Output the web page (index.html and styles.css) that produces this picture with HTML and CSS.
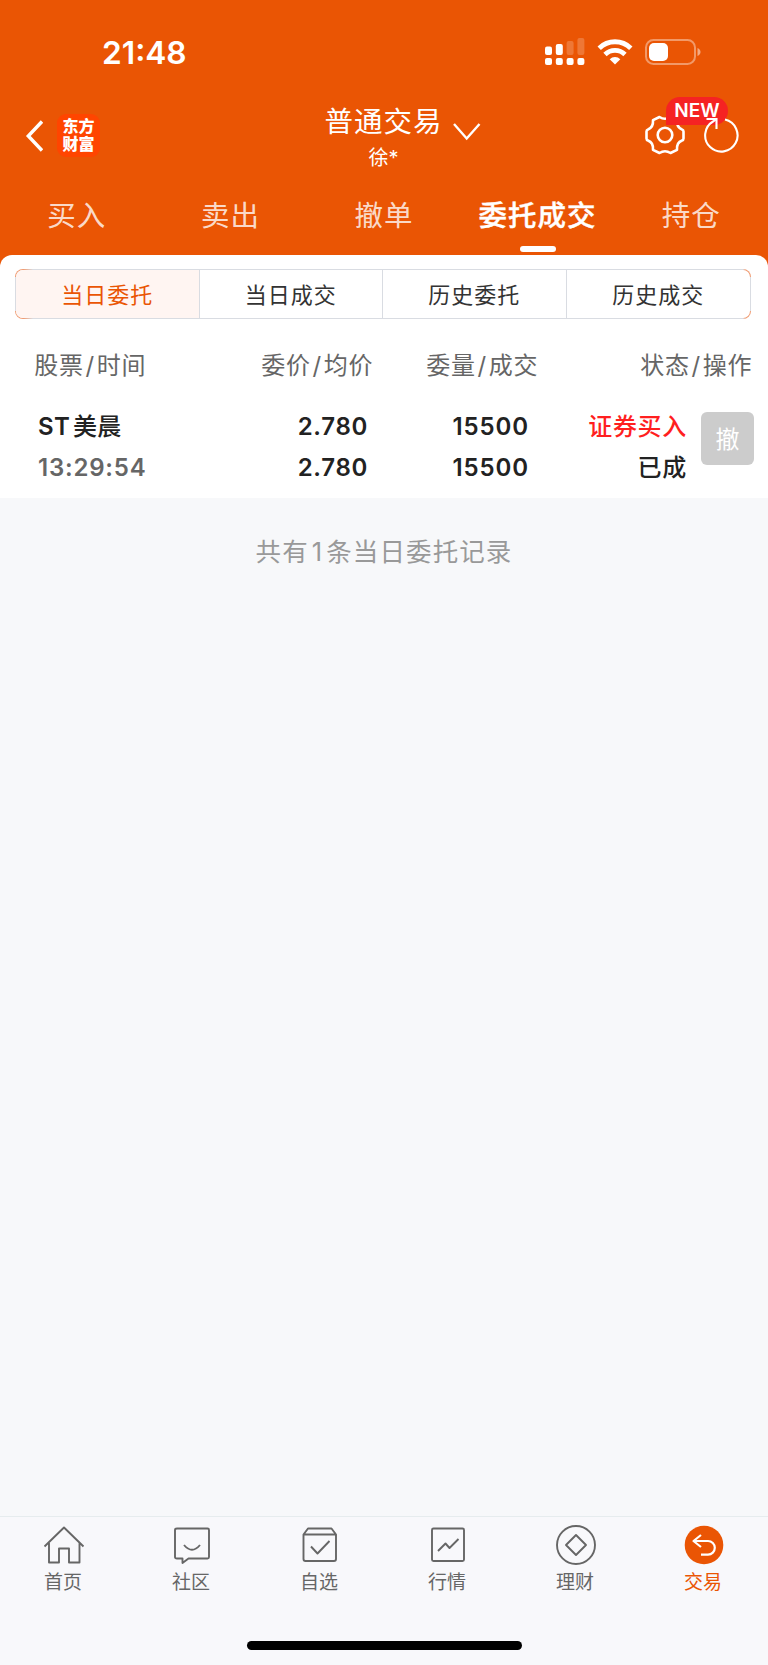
FILE: index.html
```html
<!doctype html>
<html lang="zh-CN">
<head>
    <meta charset="UTF-8">
    <meta name="viewport" content="width=device-width, initial-scale=1.0">
    <title>委托成交</title>
    <link rel="stylesheet" href="styles.css">
</head>
<body>
<div class="app">
    <header class="header">
        <div class="statusBar">
            <span class="time">21:48</span>
            <div class="statusIcons">
                <svg class="signal" width="40" height="28" viewBox="0 0 40 28" fill="#fff">
                    <rect x="0" y="8.500" width="7" height="8.500" rx="2"/>
                    <rect x="10.800" y="6" width="7" height="11" rx="2"/>
                    <rect x="21.600" y="3" width="7" height="14" rx="2" opacity=".2"/>
                    <rect x="32.400" y="0" width="7" height="17" rx="2" opacity=".2"/>
                    <rect x="0" y="20" width="7" height="7" rx="2"/>
                    <rect x="10.800" y="20" width="7" height="7" rx="2"/>
                    <rect x="21.600" y="20" width="7" height="7" rx="2"/>
                    <rect x="32.400" y="20" width="7" height="7" rx="2"/>
                </svg>
                <svg class="wifi" width="36" height="26" viewBox="0 0 36 26" fill="none" stroke="#fff" stroke-width="4.800">
                    <path d="M2.200 9.200a22.600 22.600 0 0 1 31.600 0"/>
                    <path d="M8 15.500a14.400 14.400 0 0 1 20 0"/>
                    <path d="M18 25.500l-5.300-5.300a7.500 7.500 0 0 1 10.600 0z" fill="#fff" stroke="none"/>
                </svg>
                <svg class="battery" width="57" height="26" viewBox="0 0 57 26">
                    <rect x="1" y="1" width="49" height="24" rx="7.500" fill="none" stroke="#fff" stroke-width="2" opacity=".4"/>
                    <rect x="4" y="4" width="19" height="18" rx="5" fill="#fff"/>
                    <path d="M52.500 9c4 1.500 4 6.500 0 8z" fill="#fff" opacity=".5"/>
                </svg>
            </div>
        </div>
        <div class="navBar">
            <div class="navLeft">
                <svg width="18" height="32" viewBox="0 0 18 32" fill="none" stroke="#fff" stroke-width="3.400">
                    <path d="M17 1.500L3.300 16L17 30.500"/>
                </svg>
                <div class="logo">东方<br>财富</div>
            </div>
            <div class="account">
                <div class="accountType">普通交易</div>
                <div class="accountName">徐*</div>
                <svg class="arrowDown" width="28" height="18" viewBox="0 0 28 18" fill="none" stroke="#fff" stroke-width="2.400">
                    <path d="M1 1L13.700 15.500L26.500 1"/>
                </svg>
            </div>
            <div class="navRight">
                <svg class="gear" width="42" height="42" viewBox="-21 -21 42 42" fill="none" stroke="#fff" stroke-width="2.600" stroke-linejoin="round">
                    <path d="M-5.500-18Q0-14.500 5.500-18L12-14.800Q11.500-7.500 17-5.500Q18.500-5 18.500-3.500V3.500Q18.500 5 17 5.500Q11.500 7.500 12 14.800L5.500 18Q0 14.500-5.500 18L-12 14.800Q-11.500 7.500-17 5.500Q-18.500 5-18.500 3.500V-3.500Q-18.500-5-17-5.500Q-11.500-7.500-12-14.800Z"/>
                    <circle r="7.300"/>
                </svg>
                <span class="badge">NEW</span>
                <svg class="refresh" width="36" height="38" viewBox="-18 -20 36 38" fill="none" stroke="#fff" stroke-width="2.100">
                    <path d="M4-15.400A16.200 16.200 0 1 1-8-13.500L-4.500-16"/>
                    <path d="M-14.500-16H-4.500V-6"/>
                </svg>
            </div>
        </div>
        <nav class="tabs">
            <a class="tab">买入</a>
            <a class="tab">卖出</a>
            <a class="tab">撤单</a>
            <a class="tab active">委托成交</a>
            <a class="tab">持仓</a>
        </nav>
    </header>
    <main class="content">
        <section class="panel">
            <div class="segment">
                <button class="active">当日委托</button>
                <button>当日成交</button>
                <button>历史委托</button>
                <button>历史成交</button>
            </div>
            <div class="listHead">
                <span>股票<i>/</i>时间</span>
                <span>委价<i>/</i>均价</span>
                <span>委量<i>/</i>成交</span>
                <span>状态<i>/</i>操作</span>
            </div>
            <div class="order">
                <div class="cell name"><b>ST<em>美晨</em></b><span>13:29:54</span></div>
                <div class="cell"><b>2.780</b><b>2.780</b></div>
                <div class="cell volume"><b>15500</b><b>15500</b></div>
                <div class="cell state"><b class="buy">证券买入</b><b>已成</b></div>
                <button class="cancel">撤</button>
            </div>
        </section>
        <p class="total">共有<span>1</span>条当日委托记录</p>
    </main>
    <footer class="footer">
        <nav class="bottomNav">
            <a class="item">
                <svg width="42" height="42" viewBox="0 0 42 42">
                    <path d="M1.500 22.500L21 3.500L40.500 22.500M6 19V38.500H16V24.500H26V38.500H36.500V19"/>
                </svg>
                <span>首页</span>
            </a>
            <a class="item">
                <svg width="42" height="42" viewBox="0 0 42 42">
                    <path d="M6 4.500H36.500Q38 4.500 38 6V33Q38 34.500 36.500 34.500H17.500L11.500 39V34.500H6Q4 34.500 4 33V6Q4 4.500 6 4.500Z"/>
                    <path d="M13 21Q21 30.500 29 21"/>
                </svg>
                <span>社区</span>
            </a>
            <a class="item">
                <svg width="42" height="42" viewBox="0 0 42 42">
                    <path d="M4.500 10.500V35Q4.500 37 6.500 37H35Q37 37 37 35V10.500L32.500 4.500H9ZM4.500 10.500H37M12 22.500L18.500 29.500L30.500 17"/>
                </svg>
                <span>自选</span>
            </a>
            <a class="item">
                <svg width="42" height="42" viewBox="0 0 42 42">
                    <rect x="5" y="4.500" width="32" height="32.500" rx="1.500"/>
                    <path d="M11 27L18.500 19.500L22.500 24L31.500 15"/>
                </svg>
                <span>行情</span>
            </a>
            <a class="item">
                <svg width="42" height="42" viewBox="0 0 42 42">
                    <circle cx="21" cy="21" r="19"/>
                    <path d="M21 11L31 21L21 31L11 21Z"/>
                </svg>
                <span>理财</span>
            </a>
            <a class="item active">
                <svg width="42" height="42" viewBox="0 0 42 42">
                    <circle class="disc" cx="21" cy="21" r="19.300"/>
                    <path d="M18 11L10.500 17L18 23M10.500 17H25A6.800 6.800 0 0 1 25 30.600H18"/>
                </svg>
                <span>交易</span>
            </a>
        </nav>
        <div class="homeBar"></div>
    </footer>
</div>
</body>
</html>
```
FILE: styles.css
```css
* {
    box-sizing: border-box;
}
body {
    margin: 0;
    background: #f7f8fa;
    color: #222;
    font-family: Inter, "Noto Sans CJK SC", sans-serif;
}
button {
    margin: 0;
    padding: 0;
    border: none;
    background: none;
    font-family: inherit;
}
svg {
    display: block;
}
.app {
    display: flex;
    flex-direction: column;
    height: 1665px;
    overflow: hidden;
}

.header {
    height: 267px;
    flex: none;
    background: #ea5504;
    color: #fff;
}
.statusBar {
    display: flex;
    justify-content: space-between;
    height: 96px;
    padding: 32px 66px 0 102px;
}
.time {
    font-size: 31.7px;
    font-weight: 600;
    line-height: 41px;
}
.statusIcons {
    display: flex;
    align-items: flex-start;
    padding-top: 6px;
}
.wifi {
    margin: 1px 12.5px 0 11.5px;
}
.battery {
    margin-top: 1px;
}

.navBar {
    display: grid;
    grid-template-columns: 1fr 160px 1fr;
    height: 88px;
}
.navLeft {
    display: flex;
    align-items: center;
    gap: 14px;
    height: 79px;
    padding-left: 25px;
}
.logo {
    width: 43px;
    height: 43px;
    padding-top: 3px;
    border-radius: 9px;
    background: #ff4500;
    font-size: 16px;
    font-weight: 900;
    line-height: 18px;
    text-align: center;
}
.account {
    position: relative;
    text-align: center;
}
.accountType {
    height: 48px;
    margin-left: -1px;
    font-size: 28.5px;
    letter-spacing: 1px;
    line-height: 52px;
    white-space: nowrap;
}
.accountName {
    margin-left: -1px;
    font-size: 20px;
    line-height: 28px;
}
.arrowDown {
    position: absolute;
    left: 149px;
    top: 27px;
}
.navRight {
    position: relative;
    display: flex;
    justify-content: flex-end;
    gap: 17px;
    padding: 18px 29px 0 0;
}
.badge {
    position: absolute;
    right: 40px;
    top: 1px;
    width: 62px;
    height: 28px;
    border-radius: 14px 14px 14px 0;
    background: #f52323;
    font-size: 19px;
    font-weight: 600;
    line-height: 28px;
    text-align: center;
}
.refresh {
    position: relative;
    top: 1px;
}

.tabs {
    display: grid;
    grid-template-columns: repeat(5, 1fr);
    height: 71px;
}
.tab {
    display: flex;
    flex-direction: column;
    align-items: center;
    color: #ffffffcc;
    font-size: 28.5px;
    letter-spacing: 1px;
    line-height: 64px;
    white-space: nowrap;
}
.tab.active {
    color: #fff;
    font-weight: 500;
    -webkit-text-stroke: .4px #fff;
}
.tab.active::after {
    content: "";
    width: 36px;
    height: 6px;
    margin-top: -2px;
    border-radius: 3px;
    background: #fff;
}

.content {
    flex: 1;
    margin-top: -12px;
}
.panel {
    height: 243px;
    padding: 14px 14px 0;
    border-radius: 12px 12px 0 0;
    background: #fff;
}
.segment {
    display: grid;
    grid-template-columns: repeat(4, 1fr);
    height: 50px;
    margin: 0 3px 0 1px;
    border: 1px solid transparent;
    border-radius: 8px;
    /* grey border that turns orange at the rounded corners */
    background:
        linear-gradient(#fff, #fff) padding-box,
        linear-gradient(transparent 8px, #d9dce2 8px calc(100% - 8px), transparent calc(100% - 8px)) border-box,
        linear-gradient(90deg, #f09a70 8px, #d9dce2 18px calc(100% - 8px), #f09a70 calc(100% - 6px)) border-box;
    overflow: hidden;
}
.segment button {
    padding-bottom: 2px;
    color: #333;
    font-size: 22px;
    letter-spacing: 1px;
}
.segment button:not(:last-child) {
    border-right: 1px solid #d9dce2;
}
.segment button.active {
    background: #fff5f2;
    color: #ea5504;
}

.listHead {
    display: grid;
    grid-template-columns: 132px 227px 165px 214px;
    padding-top: 25px;
    color: #666;
    font-size: 24px;
    letter-spacing: .6px;
    line-height: 44px;
    text-align: right;
    white-space: nowrap;
}
.listHead i {
    padding: 0 2px;
    font-style: normal;
}
.order {
    display: grid;
    grid-template-columns: 142px 212px 161px 158px 68px;
    padding-top: 18px;
}
.cell {
    display: flex;
    flex-direction: column;
    font-size: 24px;
    letter-spacing: .7px;
    line-height: 41px;
    text-align: right;
    white-space: nowrap;
}
.cell b {
    font-weight: 600;
}
.cell.name {
    padding-left: 24px;
    text-align: left;
}
.name b {
    letter-spacing: .3px;
}
.name em {
    padding-left: 3px;
    font-style: normal;
    font-weight: 500;
}
.name span {
    color: #666;
    font-weight: 600;
    letter-spacing: .8px;
}
.volume {
    letter-spacing: .9px;
}
.state b {
    font-weight: 500;
}
.cell .buy {
    color: #ff1f1f;
}
.cancel {
    justify-self: end;
    width: 53px;
    height: 53px;
    margin: 6px 1px 0 0;
    padding-bottom: 2px;
    border-radius: 6px;
    background: #ccc;
    color: #fff;
    font-size: 24px;
}
.total {
    margin: 32px 0 0;
    color: #999;
    font-size: 25.5px;
    letter-spacing: 1.1px;
    line-height: 44px;
    text-align: center;
}
.total span {
    padding: 0 3px;
}

.footer {
    height: 149px;
    border-top: 1px solid #e6ecee;
    background: #f8f8fb;
}
.bottomNav {
    display: grid;
    grid-template-columns: repeat(6, 1fr);
    height: 124px;
    padding-top: 7px;
}
.item {
    display: flex;
    flex-direction: column;
    align-items: center;
    color: #666;
    font-size: 19px;
    line-height: 34px;
}
.item span {
    margin-right: 2px;
}
.item svg {
    fill: none;
    stroke: #666;
    stroke-width: 1.9;
    stroke-linejoin: round;
}
.item.active {
    color: #ea5504;
}
.item.active svg {
    stroke: #fff;
    stroke-width: 2.2;
}
.item .disc {
    fill: #ea5504;
    stroke: none;
}
.homeBar {
    width: 275px;
    height: 9px;
    margin: 0 auto;
    border-radius: 5px;
    background: #000;
}
```
